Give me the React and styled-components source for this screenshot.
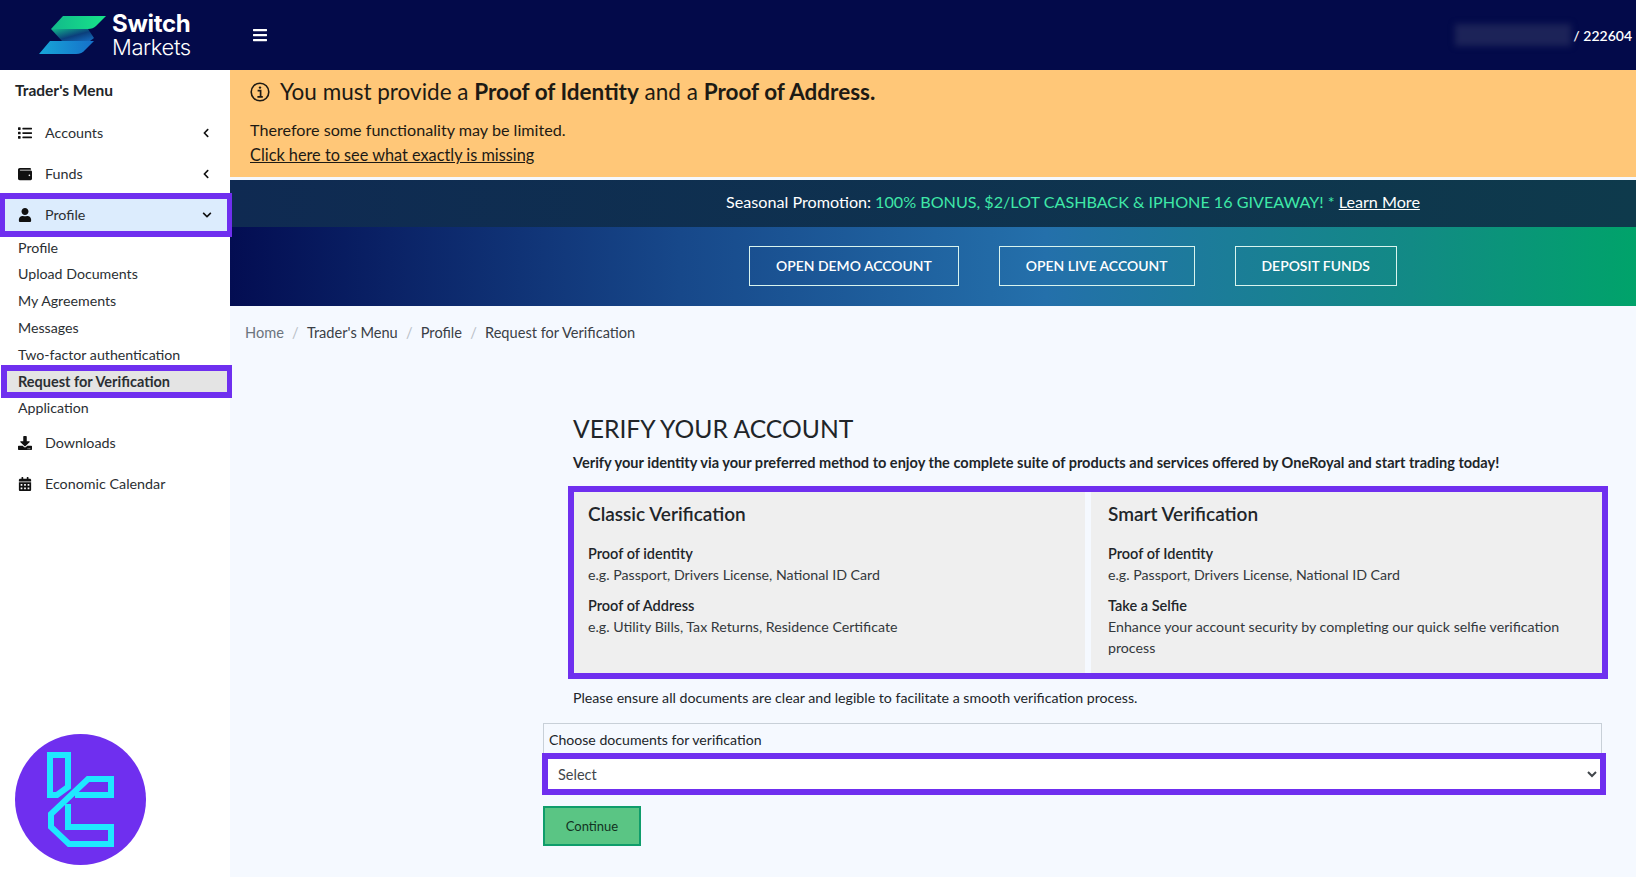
import React from 'react'
import styled, { createGlobalStyle } from 'styled-components'
import {
  FaBars,
  FaCalendarAlt,
  FaChevronDown,
  FaChevronLeft,
  FaDownload,
  FaList,
  FaUser,
  FaWallet,
} from 'react-icons/fa'

const GlobalStyle = createGlobalStyle`
  html, body {
    margin: 0;
    padding: 0;
    background: #f5f9ff;
    font-family: 'Lato', 'Noto Sans', sans-serif;
    color: #212529;
  }
  * { box-sizing: border-box; }
`

const Page = styled.div`
  width: 100%;
  height: 100vh;
  overflow: hidden;
  position: relative;
  display: flex;
  flex-direction: column;
`

const Header = styled.header`
  height: 70px;
  flex: none;
  background: #030a4a;
  display: flex;
  align-items: center;
  color: #fff;
`

const Brand = styled.div`
  width: 230px;
  display: flex;
  align-items: center;
  padding-left: 39px;
  gap: 6px;
`

const BrandText = styled.div`
  font-family: 'Inter', sans-serif;
  color: #fff;
  strong { display: block; font-size: 24px; line-height: 24px; font-weight: 700; letter-spacing: -0.3px; }
  span { display: block; font-size: 22px; line-height: 22px; font-weight: 300; letter-spacing: -0.4px; }
`

const Burger = styled.button`
  border: none;
  background: none;
  color: #fff;
  padding: 0;
  margin-left: 22px;
  display: flex;
  font-size: 16px;
`

const Account = styled.div`
  margin-left: auto;
  padding-right: 4px;
  display: flex;
  align-items: center;
  font-size: 14px;
  font-weight: 600;
`

const Blurred = styled.div`
  width: 116px;
  height: 22px;
  margin-right: 2px;
  background: #1c2358;
  filter: blur(3px);
`

const Body = styled.div`
  flex: 1;
  display: flex;
  min-height: 0;
`

const Sidebar = styled.aside`
  width: 230px;
  flex: none;
  background: #fff;
  padding-top: 10px;
`

const SideTitle = styled.div`
  font-size: 15.5px;
  font-weight: 700;
  padding-left: 15px;
  height: 20px;
  line-height: 20px;
  margin-bottom: 12px;
`

const SideItem = styled.div`
  height: ${(p) => (p.$open ? '44px' : '41px')};
  margin: ${(p) => (p.$open ? '-1px -1.5px -3.4px 0' : '0')};
  position: ${(p) => (p.$open ? 'relative' : 'static')};
  display: flex;
  align-items: center;
  padding: 0 ${(p) => (p.$open ? '15px' : '19px')} ${(p) => (p.$open ? '1px' : '0')} ${(p) => (p.$open ? '13px' : '18px')};
  font-size: 14.3px;
  background: ${(p) => (p.$open ? '#dcecfd' : 'transparent')};
  border: ${(p) => (p.$open ? 'solid #6f2fef' : 'none')};
  border-width: 6px 5.5px 6px 5px;
  color: #2b2f33;
  svg { flex: none; }
`

const SideIcon = styled.span`
  width: 27px;
  display: flex;
  color: #111;
  font-size: 14px;
`

const SideCaret = styled.span`
  margin-left: auto;
  display: flex;
  font-size: 10px;
  color: #111;
`

const SubList = styled.div`
  margin-bottom: 1px;
`

const SubItem = styled.div`
  height: ${(p) => (p.$active ? '33px' : '26.8px')};
  margin: ${(p) => (p.$active ? '-3.1px -1.5px -3.1px 1px' : '0')};
  position: ${(p) => (p.$active ? 'relative' : 'static')};
  display: flex;
  align-items: center;
  padding-left: ${(p) => (p.$active ? '11px' : '18px')};
  font-size: ${(p) => (p.$active ? '14.5px' : '14.2px')};
  font-weight: ${(p) => (p.$active ? 700 : 400)};
  background: ${(p) => (p.$active ? '#e4e4e4' : 'transparent')};
  border: ${(p) => (p.$active ? 'solid #6f2fef' : 'none')};
  border-width: 6px 5.5px 6px 6px;
  color: #2b2f33;
`

const Main = styled.main`
  flex: 1;
  min-width: 0;
  background: #f5f9ff;
  display: flex;
  flex-direction: column;
`

const Alert = styled.div`
  height: 107px;
  flex: none;
  background: #ffc778;
  padding: 7px 20px 0;
  color: #1d1a14;
`

const AlertTitle = styled.div`
  display: flex;
  align-items: center;
  gap: 10px;
  font-size: 22.5px;
  line-height: 30px;
  margin-bottom: 11px;
`

const AlertText = styled.div`
  font-size: 16.15px;
  line-height: 24px;
`

const AlertLink = styled.a`
  font-size: 16.3px;
  line-height: 25px;
  color: inherit;
  text-decoration: underline;
  display: block;
`

const Hero = styled.section`
  margin-top: 3px;
  height: 126px;
  flex: none;
  background: linear-gradient(to right, #030d52 0%, #17488a 32%, #2470ab 58%, #128a85 84%, #00a36a 100%);
`

const Promo = styled.div`
  height: 47px;
  background: linear-gradient(to right, #0f2a52, #0e3a4c);
  color: #fff;
  font-size: 16.15px;
  display: flex;
  align-items: center;
  justify-content: center;
  padding: 0 0 4px 280px;
  gap: 4px;
  em { font-style: normal; color: #3fe8a8; }
  a { color: #fff; text-decoration: underline; }
`

const CtaRow = styled.div`
  height: 79px;
  display: flex;
  justify-content: center;
  align-items: center;
  gap: 40px;
  padding: 0 0 2px 280px;
`

const CtaButton = styled.button`
  height: 40px;
  padding: 0 26px;
  background: transparent;
  border: 1px solid #d9f4ee;
  color: #fff;
  font-family: inherit;
  font-size: 13.95px;
  font-weight: 600;
`

const Breadcrumb = styled.nav`
  height: 52px;
  flex: none;
  display: flex;
  align-items: center;
  padding-left: 15px;
  font-size: 14.6px;
  color: #3a4046;
`

const Crumb = styled.span`
  color: ${(p) => (p.$muted ? '#6c757d' : '#3a4046')};
  &:not(:first-child)::before {
    content: '/';
    color: #b9c0c7;
    padding: 0 8.2px;
  }
`

const Content = styled.div`
  padding: 55px 34px 0 313px;
`

const Intro = styled.div`
  padding-left: 30px;
`

const Heading = styled.h2`
  margin: 0;
  font-size: 24.7px;
  line-height: 32px;
  font-weight: 400;
  color: #212529;
`

const Lead = styled.p`
  margin: 8px 0 0;
  font-size: 14.55px;
  line-height: 20px;
  font-weight: 700;
`

const Methods = styled.div`
  margin: 13px -6px 0 25px;
  height: 193px;
  border: 6px solid #6f2fef;
  display: grid;
  grid-template-columns: 1fr 1fr;
  gap: 6px;
  background: #f5f9ff;
`

const Method = styled.div`
  background: #efefef;
  min-height: 0;
  padding: 10px 13px 0 ${(p) => (p.$second ? '17px' : '14px')};
`

const MethodTitle = styled.h3`
  margin: 0 0 17px;
  font-size: 19px;
  line-height: 24px;
  font-weight: 600;
`

const MethodName = styled.div`
  font-size: 14.5px;
  line-height: 21px;
  font-weight: 600;
`

const MethodText = styled.div`
  font-size: 14.2px;
  line-height: 21px;
  margin-bottom: 10px;
  color: #33383c;
`

const Note = styled.p`
  margin: 9px 0 0 30px;
  font-size: 14.2px;
  line-height: 20px;
`

const Fieldset = styled.div`
  margin-top: 15px;
  border: 1px solid #c8d0d8;
  border-bottom: none;
  height: 30px;
  padding: 6px 5px 0;
  font-size: 14.1px;
  line-height: 20px;
`

const SelectFrame = styled.div`
  margin: 0 -4px 0 -1px;
  height: 42px;
  border: 6px solid #6f2fef;
  background: #fff;
`

const Select = styled.select`
  width: 100%;
  height: 100%;
  border: none;
  background: #fff;
  padding-left: 6px;
  font-family: inherit;
  font-size: 14.5px;
  color: #41464b;
  outline: none;
`

const Continue = styled.button`
  display: block;
  margin-top: 11px;
  width: 98px;
  height: 40px;
  background: #5ac584;
  border: 2px solid #0f9d6b;
  font-family: inherit;
  font-size: 13px;
  color: #12321f;
`

const Badge = styled.div`
  position: absolute;
  left: 15px;
  top: 734px;
  width: 131px;
  height: 131px;
  border-radius: 50%;
  background: #6f2fef;
  display: flex;
`

const LogoMark = () => (
  <svg width="67" height="40" viewBox="39 15 67 40">
    <defs>
      <linearGradient id="sm-top" x1="0" x2="1" y1="0" y2="0">
        <stop offset="0" stopColor="#12b98a" />
        <stop offset="1" stopColor="#17e58a" />
      </linearGradient>
      <linearGradient id="sm-mid" x1="0" x2="1" y1="0" y2="1">
        <stop offset="0" stopColor="#12b98a" />
        <stop offset="0.55" stopColor="#0b3f7c" />
        <stop offset="1" stopColor="#1670c4" />
      </linearGradient>
      <linearGradient id="sm-bot" x1="0" x2="1" y1="0" y2="0">
        <stop offset="0" stopColor="#17a6d8" />
        <stop offset="1" stopColor="#1670c9" />
      </linearGradient>
    </defs>
    <path d="M63 16H106L96 26Q93 29 88 29H51Z" fill="url(#sm-top)" />
    <path d="M51 29H88L94 38L90 41H62Z" fill="url(#sm-mid)" />
    <path d="M50 41H94L85 50Q82 54 76 54H39Z" fill="url(#sm-bot)" />
  </svg>
)

const TcLogo = () => (
  <svg width="131" height="131" viewBox="15 14 131 131" fill="none" stroke="#1fe8ff" strokeWidth="6">
    <path d="M50 35H68V67L57 75H50Z" />
    <path d="M75 75H111V59H88L51 94V107L69 124H111V107H68V84" />
  </svg>
)

const InfoIcon = () => (
  <svg width="20" height="20" viewBox="0 0 20 20" fill="none" stroke="#1d1a14">
    <circle cx="10" cy="10" r="8.8" strokeWidth="1.6" />
    <circle cx="10" cy="5.6" r="1.2" fill="#1d1a14" stroke="none" />
    <path d="M7.6 8.6H10.6V14.4M7.4 14.8H12.8" strokeWidth="1.7" />
  </svg>
)

const subItems = [
  'Profile',
  'Upload Documents',
  'My Agreements',
  'Messages',
  'Two-factor authentication',
  'Request for Verification',
  'Application',
]

function App() {
  return (
    <Page>
      <GlobalStyle />
      <Header>
        <Brand>
          <LogoMark />
          <BrandText>
            <strong>Switch</strong>
            <span>Markets</span>
          </BrandText>
        </Brand>
        <Burger aria-label="menu">
          <FaBars />
        </Burger>
        <Account>
          <Blurred />
          / 222604
        </Account>
      </Header>
      <Body>
        <Sidebar>
          <SideTitle>Trader's Menu</SideTitle>
          <SideItem>
            <SideIcon><FaList /></SideIcon>
            Accounts
            <SideCaret><FaChevronLeft /></SideCaret>
          </SideItem>
          <SideItem>
            <SideIcon><FaWallet /></SideIcon>
            Funds
            <SideCaret><FaChevronLeft /></SideCaret>
          </SideItem>
          <SideItem $open>
            <SideIcon><FaUser /></SideIcon>
            Profile
            <SideCaret><FaChevronDown /></SideCaret>
          </SideItem>
          <SubList>
            {subItems.map((item) => (
              <SubItem key={item} $active={item === 'Request for Verification'}>
                {item}
              </SubItem>
            ))}
          </SubList>
          <SideItem>
            <SideIcon><FaDownload /></SideIcon>
            Downloads
          </SideItem>
          <SideItem>
            <SideIcon><FaCalendarAlt /></SideIcon>
            Economic Calendar
          </SideItem>
        </Sidebar>
        <Main>
          <Alert>
            <AlertTitle>
              <InfoIcon />
              <span>
                You must provide a <b>Proof of Identity</b> and a <b>Proof of Address.</b>
              </span>
            </AlertTitle>
            <AlertText>Therefore some functionality may be limited.</AlertText>
            <AlertLink>Click here to see what exactly is missing</AlertLink>
          </Alert>
          <Hero>
            <Promo>
              Seasonal Promotion: <em>100% BONUS, $2/LOT CASHBACK &amp; IPHONE 16 GIVEAWAY! *</em>
              <a>Learn More</a>
            </Promo>
            <CtaRow>
              <CtaButton>OPEN DEMO ACCOUNT</CtaButton>
              <CtaButton>OPEN LIVE ACCOUNT</CtaButton>
              <CtaButton>DEPOSIT FUNDS</CtaButton>
            </CtaRow>
          </Hero>
          <Breadcrumb>
            <Crumb $muted>Home</Crumb>
            <Crumb>Trader's Menu</Crumb>
            <Crumb>Profile</Crumb>
            <Crumb>Request for Verification</Crumb>
          </Breadcrumb>
          <Content>
            <Intro>
              <Heading>VERIFY YOUR ACCOUNT</Heading>
              <Lead>
                Verify your identity via your preferred method to enjoy the complete suite of products and services offered by OneRoyal and start trading today!
              </Lead>
            </Intro>
            <Methods>
              <Method>
                <MethodTitle>Classic Verification</MethodTitle>
                <MethodName>Proof of identity</MethodName>
                <MethodText>e.g. Passport, Drivers License, National ID Card</MethodText>
                <MethodName>Proof of Address</MethodName>
                <MethodText>e.g. Utility Bills, Tax Returns, Residence Certificate</MethodText>
              </Method>
              <Method $second>
                <MethodTitle>Smart Verification</MethodTitle>
                <MethodName>Proof of Identity</MethodName>
                <MethodText>e.g. Passport, Drivers License, National ID Card</MethodText>
                <MethodName>Take a Selfie</MethodName>
                <MethodText>Enhance your account security by completing our quick selfie verification process</MethodText>
              </Method>
            </Methods>
            <Note>Please ensure all documents are clear and legible to facilitate a smooth verification process.</Note>
            <Fieldset>Choose documents for verification</Fieldset>
            <SelectFrame>
              <Select defaultValue="">
                <option value="">Select</option>
              </Select>
            </SelectFrame>
            <Continue>Continue</Continue>
          </Content>
        </Main>
      </Body>
      <Badge>
        <TcLogo />
      </Badge>
    </Page>
  )
}

export default App
